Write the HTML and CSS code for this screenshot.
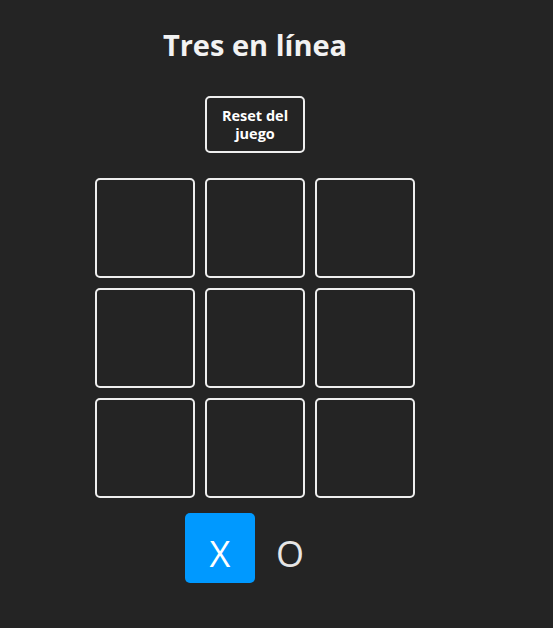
FILE: index.html
```html
<!DOCTYPE html>
<html lang="es">
<head>
<meta charset="utf-8">
<link rel="stylesheet" href="styles.css">
<title>Tres en línea</title>
</head>
<body>
<main class="board">
  <h1 class="title">Tres en línea</h1>
  <button class="reset">Reset del juego</button>
  <section class="game">
    <div class="square"></div>
    <div class="square"></div>
    <div class="square"></div>
    <div class="square"></div>
    <div class="square"></div>
    <div class="square"></div>
    <div class="square"></div>
    <div class="square"></div>
    <div class="square"></div>
  </section>
  <section class="turn">
    <div class="square turn-square is-selected">X</div>
    <div class="square turn-square">O</div>
  </section>
</main>
</body>
</html>
```
FILE: styles.css
```css
html, body {
  margin: 0;
  padding: 0;
}
body {
  background: #242424;
  color: rgba(255, 255, 255, 0.87);
  font-family: "Open Sans", "Noto Sans", sans-serif;
  min-height: 628px;
}
.board {
  width: 320px;
  margin: 0 0 0 95px;
  padding-top: 25px;
  text-align: center;
  display: flex;
  flex-direction: column;
  align-items: center;
}
.title {
  margin: 0;
  font-size: 29px;
  line-height: 40px;
  font-weight: 700;
  color: #f2f2f2;
}
.reset {
  margin-top: 31px;
  width: 100px;
  height: 57px;
  border: 2px solid #eee;
  border-radius: 5px;
  background: transparent;
  color: #fff;
  font-family: inherit;
  font-weight: 700;
  font-size: 14.5px;
  line-height: 18px;
  padding: 0 6px;
}
.game {
  margin-top: 25px;
  display: grid;
  grid-template-columns: repeat(3, 100px);
  gap: 10px;
}
.square {
  box-sizing: border-box;
  width: 100px;
  height: 100px;
  border: 2px solid #eee;
  border-radius: 5px;
  display: grid;
  place-items: center;
}
.turn {
  margin-top: 15px;
  display: flex;
  justify-content: center;
}
.turn-square {
  width: 70px;
  height: 70px;
  padding-top: 12px;
  border-color: transparent;
  font-size: 36px;
  line-height: 40px;
  color: #e6e6e6;
}
.turn-square.is-selected {
  background: #0099ff;
  color: #fff;
}
```
